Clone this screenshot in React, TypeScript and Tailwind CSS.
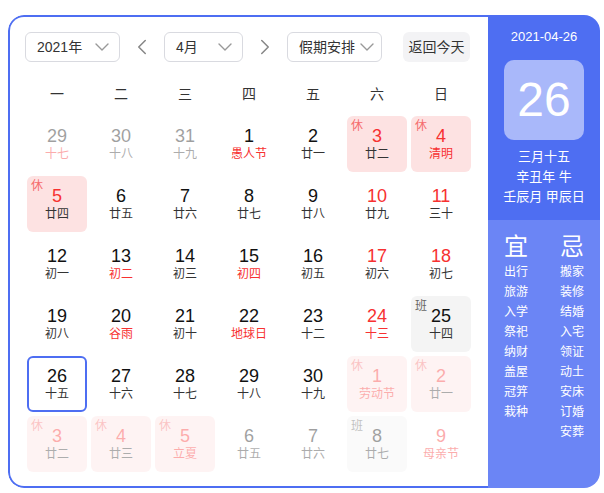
import React from 'react';
import { ChevronDown, ChevronLeft, ChevronRight } from 'lucide-react';

type Day = {
  d: number;
  l: string;
  other?: boolean;
  tag?: '休' | '班';
  numRed?: boolean;
  lunarRed?: boolean;
  today?: boolean;
};

const weeks: Day[][] = [
  [
    { d: 29, l: '十七', other: true, lunarRed: true },
    { d: 30, l: '十八', other: true },
    { d: 31, l: '十九', other: true },
    { d: 1, l: '愚人节', lunarRed: true },
    { d: 2, l: '廿一' },
    { d: 3, l: '廿二', tag: '休', numRed: true },
    { d: 4, l: '清明', tag: '休', numRed: true, lunarRed: true },
  ],
  [
    { d: 5, l: '廿四', tag: '休', numRed: true },
    { d: 6, l: '廿五' },
    { d: 7, l: '廿六' },
    { d: 8, l: '廿七' },
    { d: 9, l: '廿八' },
    { d: 10, l: '廿九', numRed: true },
    { d: 11, l: '三十', numRed: true },
  ],
  [
    { d: 12, l: '初一' },
    { d: 13, l: '初二', lunarRed: true },
    { d: 14, l: '初三' },
    { d: 15, l: '初四', lunarRed: true },
    { d: 16, l: '初五' },
    { d: 17, l: '初六', numRed: true },
    { d: 18, l: '初七', numRed: true },
  ],
  [
    { d: 19, l: '初八' },
    { d: 20, l: '谷雨', lunarRed: true },
    { d: 21, l: '初十' },
    { d: 22, l: '地球日', lunarRed: true },
    { d: 23, l: '十二' },
    { d: 24, l: '十三', numRed: true, lunarRed: true },
    { d: 25, l: '十四', tag: '班' },
  ],
  [
    { d: 26, l: '十五', today: true },
    { d: 27, l: '十六' },
    { d: 28, l: '十七' },
    { d: 29, l: '十八' },
    { d: 30, l: '十九' },
    { d: 1, l: '劳动节', other: true, tag: '休', numRed: true, lunarRed: true },
    { d: 2, l: '廿一', other: true, tag: '休', numRed: true },
  ],
  [
    { d: 3, l: '廿二', other: true, tag: '休', numRed: true },
    { d: 4, l: '廿三', other: true, tag: '休', numRed: true },
    { d: 5, l: '立夏', other: true, tag: '休', numRed: true, lunarRed: true },
    { d: 6, l: '廿五', other: true },
    { d: 7, l: '廿六', other: true },
    { d: 8, l: '廿七', other: true, tag: '班' },
    { d: 9, l: '母亲节', other: true, numRed: true, lunarRed: true },
  ],
];

const weekdays = ['一', '二', '三', '四', '五', '六', '日'];
const good = ['出行', '旅游', '入学', '祭祀', '纳财', '盖屋', '冠笄', '栽种'];
const bad = ['搬家', '装修', '结婚', '入宅', '领证', '动土', '安床', '订婚', '安葬'];

const Select = ({ label, width }: { label: string; width: string }) => (
  <div
    className={`${width} h-[30px] shrink-0 flex items-center justify-between pl-[11px] pr-[5px] border border-[#d9dae0] rounded-[6px] text-[14px] text-[#333] whitespace-nowrap`}
  >
    <span>{label}</span>
    <ChevronDown size={24} strokeWidth={1.4} className="shrink-0 text-[#999]" />
  </div>
);

const DayCell = ({ day }: { day: Day }) => {
  const box = day.today
    ? 'border-2 border-[#4e6ef2]'
    : day.tag === '休'
      ? 'bg-[#fde2e2]'
      : day.tag === '班'
        ? 'bg-[#f4f4f4]'
        : '';
  return (
    <div className={`relative m-[2px] h-[56px] rounded-[6px] flex flex-col items-center justify-center ${box} ${day.other ? 'opacity-40' : ''}`}>
      {day.tag && (
        <span className={`absolute left-[4px] top-[2px] text-[12px] leading-[16px] ${day.tag === '休' ? 'text-[#f56c6c]' : 'text-[#666]'}`}>
          {day.tag}
        </span>
      )}
      <span className={`text-[18px] leading-[20px] ${day.numRed ? 'text-[#f73131]' : 'text-[#111]'}`}>{day.d}</span>
      <span className={`text-[12px] leading-[16px] ${day.lunarRed ? 'text-[#f73131]' : 'text-[#333]'}`}>{day.l}</span>
    </div>
  );
};

export default function App() {
  return (
    <div className="w-[604px] h-[493px] bg-white pt-[15px] pl-[8px] font-['Liberation_Sans','Noto_Sans_CJK_SC',sans-serif]">
      <div className="flex w-[592px] h-[473px] rounded-[16px] overflow-hidden">
        {/* calendar */}
        <div className="w-[480px] h-full border-y-2 border-l-2 border-[#4e6ef2] rounded-l-[16px] pl-[15px] pt-[15px]">
          <div className="flex items-center">
            <Select label="2021年" width="w-[95px]" />
            <div className="w-[44px] flex justify-center">
              <ChevronLeft size={26} strokeWidth={1.4} className="text-[#888]" />
            </div>
            <Select label="4月" width="w-[79px]" />
            <div className="w-[44px] flex justify-center">
              <ChevronRight size={26} strokeWidth={1.4} className="text-[#888]" />
            </div>
            <Select label="假期安排" width="w-[95px]" />
            <button className="ml-[21px] w-[67px] h-[30px] shrink-0 rounded-[6px] bg-[#f3f3f5] text-[14px] text-[#333] whitespace-nowrap">
              返回今天
            </button>
          </div>

          <div className="mt-[12px] grid grid-cols-7 w-[448px] h-[40px] items-center text-center text-[14px] text-[#333]">
            {weekdays.map(w => (
              <span key={w}>{w}</span>
            ))}
          </div>

          <div className="grid grid-cols-7 w-[448px]">
            {weeks.flat().map((day, i) => (
              <DayCell key={i} day={day} />
            ))}
          </div>
        </div>

        {/* detail panel */}
        <div className="w-[112px] h-full flex flex-col text-white">
          <div className="h-[205px] bg-[#4e6ef2] flex flex-col items-center pt-[14px]">
            <div className="text-[13px] leading-[16px]">2021-04-26</div>
            <div className="mt-[15px] w-[80px] h-[80px] rounded-[10px] bg-[#a9b8fa] flex items-center justify-center text-[48px] leading-none">
              26
            </div>
            <div className="mt-[7px] text-[13px] leading-[20px] text-center">
              <div>三月十五</div>
              <div>辛丑年 牛</div>
              <div>壬辰月 甲辰日</div>
            </div>
          </div>
          <div className="flex-1 bg-[#6b85f5] grid grid-cols-2 content-start pt-[12px]">
            <div className="flex flex-col items-center">
              <div className="text-[24px] leading-[30px]">宜</div>
              {good.map(g => (
                <div key={g} className="text-[12px] leading-[20px]">{g}</div>
              ))}
            </div>
            <div className="flex flex-col items-center">
              <div className="text-[24px] leading-[30px]">忌</div>
              {bad.map(b => (
                <div key={b} className="text-[12px] leading-[20px]">{b}</div>
              ))}
            </div>
          </div>
        </div>
      </div>
    </div>
  );
}
